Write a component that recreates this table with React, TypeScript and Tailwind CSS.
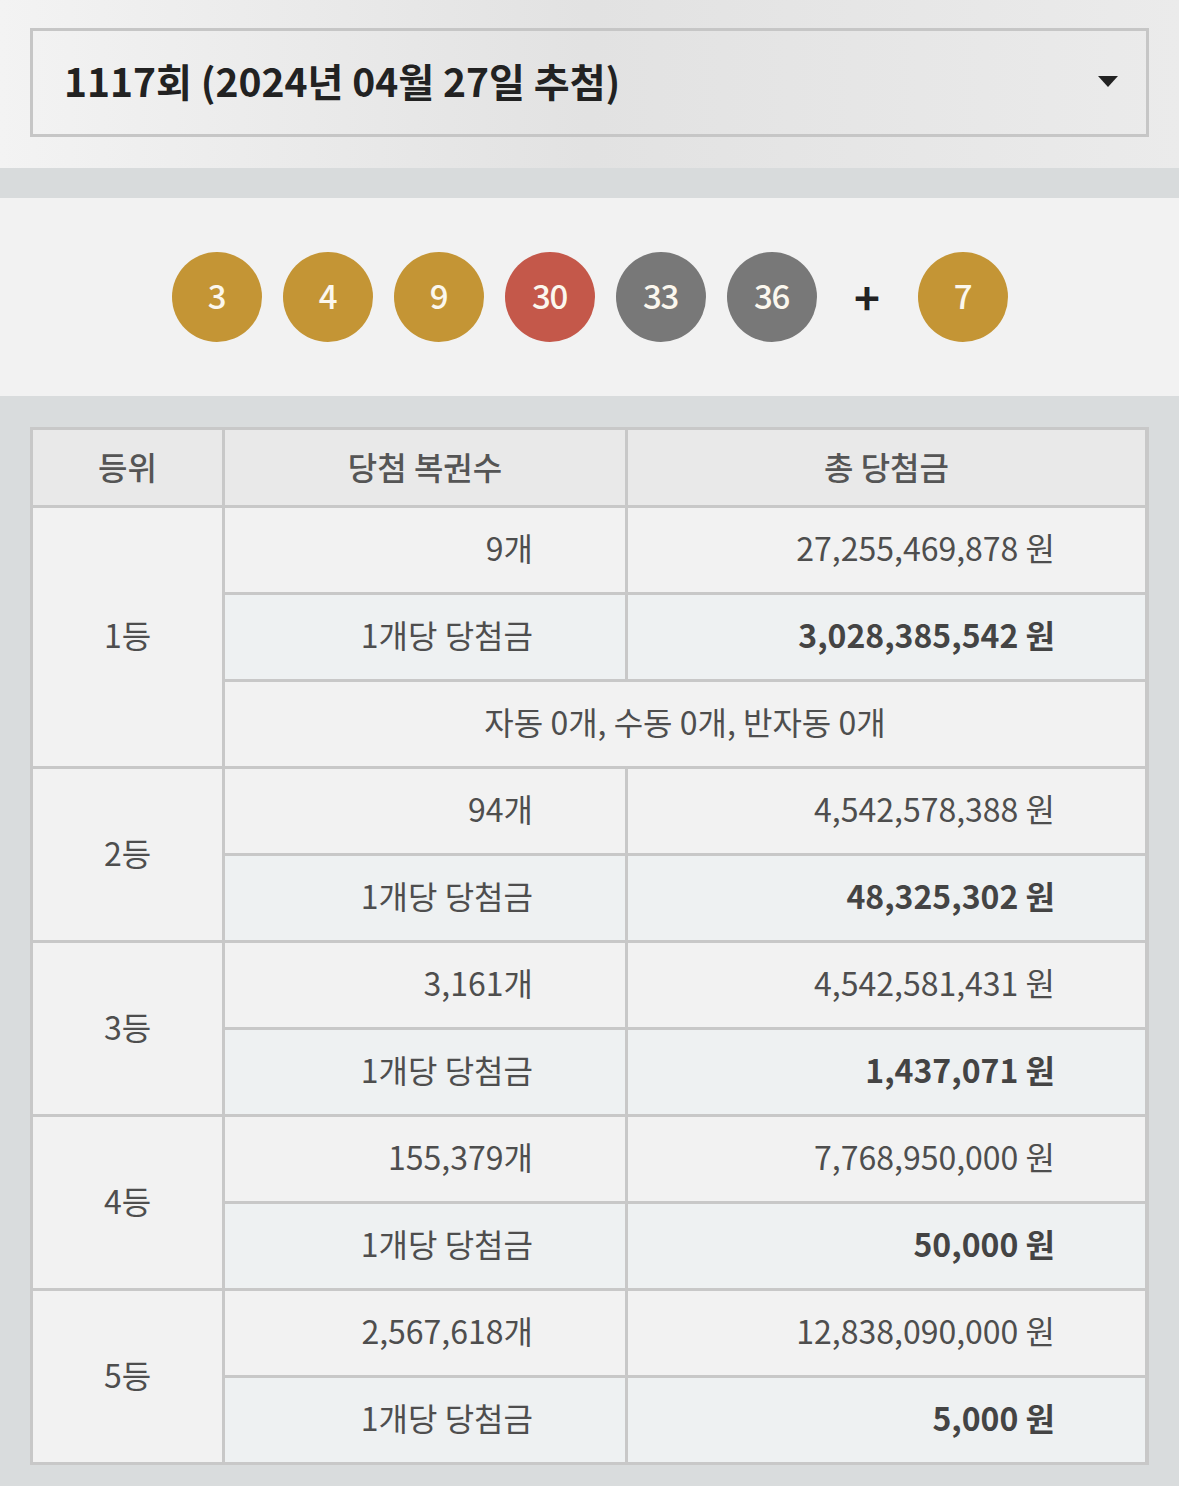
import React from "react";

type Ball = { n: number; color: string };

const balls: Ball[] = [
  { n: 3, color: "bg-[#c49535]" },
  { n: 4, color: "bg-[#c49535]" },
  { n: 9, color: "bg-[#c49535]" },
  { n: 30, color: "bg-[#c4584a]" },
  { n: 33, color: "bg-[#787878]" },
  { n: 36, color: "bg-[#787878]" },
];
const bonus: Ball = { n: 7, color: "bg-[#c49535]" };

type Rank = {
  rank: string;
  count: string;
  total: string;
  perTicket: string;
  detail?: string;
};

const ranks: Rank[] = [
  {
    rank: "1등",
    count: "9개",
    total: "27,255,469,878 원",
    perTicket: "3,028,385,542 원",
    detail: "자동 0개, 수동 0개, 반자동 0개",
  },
  { rank: "2등", count: "94개", total: "4,542,578,388 원", perTicket: "48,325,302 원" },
  { rank: "3등", count: "3,161개", total: "4,542,581,431 원", perTicket: "1,437,071 원" },
  { rank: "4등", count: "155,379개", total: "7,768,950,000 원", perTicket: "50,000 원" },
  { rank: "5등", count: "2,567,618개", total: "12,838,090,000 원", perTicket: "5,000 원" },
];

const font = "font-['Noto_Sans_CJK_KR','Noto_Sans',sans-serif]";

function LottoBall({ ball }: { ball: Ball }) {
  return (
    <div
      className={`flex h-[90px] w-[90px] items-center justify-center rounded-full ${ball.color} pb-[2px] text-[33px] font-medium tracking-[-0.04em] text-[#fbf7ee]`}
    >
      {ball.n}
    </div>
  );
}

export default function App() {
  return (
    <div className={`w-[1179px] min-h-[1486px] bg-[#d9dcdd] ${font}`}>
      {/* Draw selector */}
      <div className="h-[168px] bg-gradient-to-r from-[#f3f3f3] via-[#e2e2e2] to-[#ebebeb] px-[30px] pt-[28px]">
        <div className="flex h-[109px] items-center justify-between border-[3px] border-[#c6c6c6] pb-[4px] pl-[31px] pr-[28px]">
          <span className="text-[39px] font-bold text-[#222]">
            1117회 (2024년 04월 27일 추첨)
          </span>
          <svg width="20" height="12" viewBox="0 0 20 12" className="mt-[2px]">
            <path d="M0 0 H20 L10 11 Z" fill="#222" />
          </svg>
        </div>
      </div>

      <div className="h-[30px] bg-[#d8dbdc]" />

      {/* Winning numbers */}
      <div className="flex h-[198px] items-center justify-center bg-[#f2f2f2]">
        <div className="flex items-center gap-[21px]">
          {balls.map((b) => (
            <LottoBall key={b.n} ball={b} />
          ))}
        </div>
        <span className="flex w-[101px] justify-center pb-[2px] text-[44px] font-bold leading-none text-[#222]">
          +
        </span>
        <LottoBall ball={bonus} />
      </div>

      {/* Prize table */}
      <div className="px-[30px] pb-[22px] pt-[31px]">
        <div className="grid grid-cols-[189px_400px_517px] gap-[3px] bg-[#c8c8c8] p-[3px] text-[32px] text-[#4e4e4e]">
          <div className="flex h-[75px] items-center justify-center bg-[#e9e9e9] pb-[4px] font-medium text-[#555]">
            등위
          </div>
          <div className="flex h-[75px] items-center justify-center bg-[#e9e9e9] pb-[4px] font-medium text-[#555]">
            당첨 복권수
          </div>
          <div className="flex h-[75px] items-center justify-center bg-[#e9e9e9] pb-[4px] font-medium text-[#555]">
            총 당첨금
          </div>

          {ranks.map((r) => (
            <React.Fragment key={r.rank}>
              <div
                className={`flex items-center justify-center bg-[#f2f2f2] pb-[6px] ${
                  r.detail ? "row-span-3" : "row-span-2"
                }`}
              >
                {r.rank}
              </div>
              <div className="flex h-[84px] items-center justify-end bg-[#f2f2f2] pb-[6px] pr-[92px]">
                {r.count}
              </div>
              <div className="flex h-[84px] items-center justify-end bg-[#f2f2f2] pb-[6px] pr-[90px]">
                {r.total}
              </div>
              <div className="flex h-[84px] items-center justify-end bg-[#eef1f2] pb-[6px] pr-[92px]">
                1개당 당첨금
              </div>
              <div className="flex h-[84px] items-center justify-end bg-[#eef1f2] pb-[6px] pr-[90px] font-bold text-[#444]">
                {r.perTicket}
              </div>
              {r.detail && (
                <div className="col-span-2 flex h-[84px] items-center justify-center bg-[#f2f2f2] pb-[6px]">
                  {r.detail}
                </div>
              )}
            </React.Fragment>
          ))}
        </div>
      </div>
    </div>
  );
}
